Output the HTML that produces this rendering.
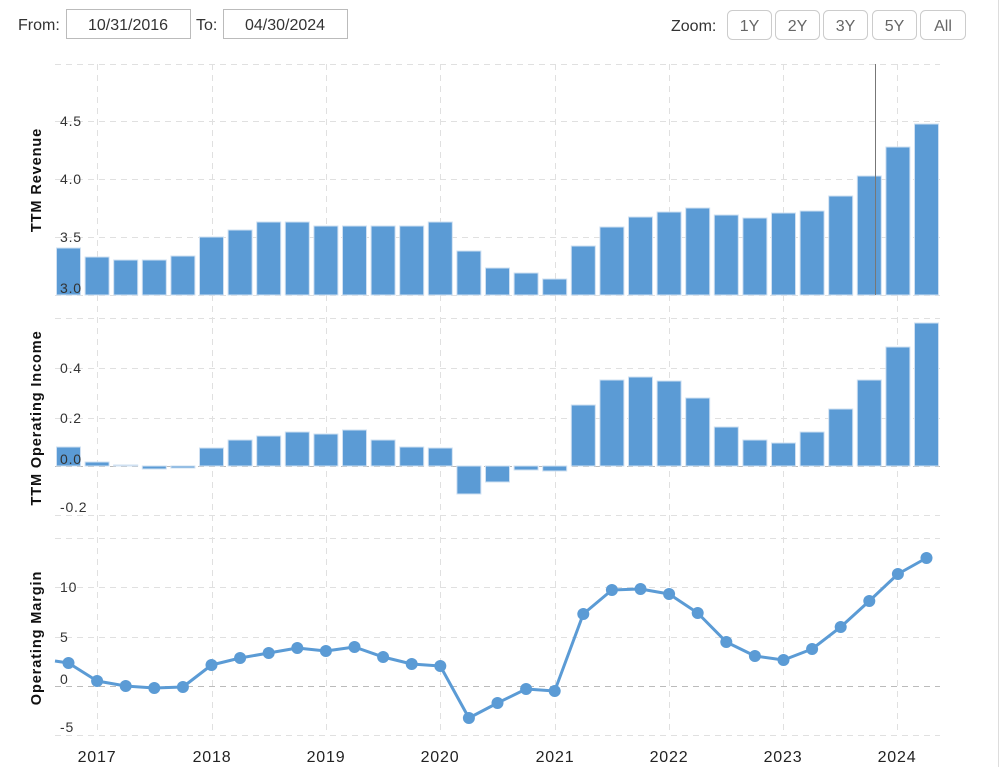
<!DOCTYPE html>
<html><head><meta charset="utf-8"><style>
body{margin:0;background:#fff;width:1004px;height:767px;overflow:hidden;font-family:"Liberation Sans",sans-serif}
</style></head><body>
<svg width="1004" height="767" xmlns="http://www.w3.org/2000/svg" font-family="Liberation Sans, sans-serif">
<text x="18" y="30" font-size="16" fill="#333">From:</text>
<rect x="66.5" y="9.5" width="124" height="29" fill="#fff" stroke="#bbb"/>
<text x="128" y="30" font-size="16" fill="#333" text-anchor="middle">10/31/2016</text>
<text x="196" y="30" font-size="16" fill="#333">To:</text>
<rect x="223.5" y="9.5" width="124" height="29" fill="#fff" stroke="#bbb"/>
<text x="285" y="30" font-size="16" fill="#333" text-anchor="middle">04/30/2024</text>
<text x="671" y="31" font-size="16" fill="#333">Zoom:</text>
<g font-size="16" fill="#666" text-anchor="middle">
<rect x="727.5" y="10.5" width="44" height="29" rx="5" fill="#fff" stroke="#ccc"/><text x="749.5" y="31">1Y</text>
<rect x="775.5" y="10.5" width="44" height="29" rx="5" fill="#fff" stroke="#ccc"/><text x="797.5" y="31">2Y</text>
<rect x="823.5" y="10.5" width="44" height="29" rx="5" fill="#fff" stroke="#ccc"/><text x="845.5" y="31">3Y</text>
<rect x="872.5" y="10.5" width="44" height="29" rx="5" fill="#fff" stroke="#ccc"/><text x="894.5" y="31">5Y</text>
<rect x="920.5" y="10.5" width="45" height="29" rx="5" fill="#fff" stroke="#ccc"/><text x="943" y="31">All</text>
</g>
<line x1="998.5" y1="0" x2="998.5" y2="767" stroke="#ddd"/>
<g stroke="#e0e0e0" stroke-dasharray="6,5" stroke-width="1">
<line x1="55" y1="64.5" x2="940" y2="64.5"/><line x1="55" y1="121.5" x2="940" y2="121.5"/><line x1="55" y1="179.5" x2="940" y2="179.5"/><line x1="55" y1="237.5" x2="940" y2="237.5"/><line x1="55" y1="295.5" x2="940" y2="295.5"/>
<line x1="55" y1="318.5" x2="940" y2="318.5"/><line x1="55" y1="368.5" x2="940" y2="368.5"/><line x1="55" y1="418.5" x2="940" y2="418.5"/><line x1="55" y1="515.5" x2="940" y2="515.5"/>
<line x1="55" y1="538.5" x2="940" y2="538.5"/><line x1="55" y1="587.5" x2="940" y2="587.5"/><line x1="55" y1="637.5" x2="940" y2="637.5"/><line x1="55" y1="735.5" x2="940" y2="735.5"/>
<line x1="97.5" y1="64" x2="97.5" y2="735"/><line x1="212.5" y1="64" x2="212.5" y2="735"/><line x1="326.5" y1="64" x2="326.5" y2="735"/><line x1="440.5" y1="64" x2="440.5" y2="735"/><line x1="555.5" y1="64" x2="555.5" y2="735"/><line x1="669.5" y1="64" x2="669.5" y2="735"/><line x1="783.5" y1="64" x2="783.5" y2="735"/><line x1="897.5" y1="64" x2="897.5" y2="735"/>
</g>
<g stroke="#bbb" stroke-dasharray="6,5"><line x1="55" y1="466.5" x2="940" y2="466.5"/><line x1="55" y1="686.5" x2="940" y2="686.5"/></g>
<g id="rev" fill="#5b9bd5" stroke="#cfe0f2" stroke-width="1"></g>
<g id="oi" fill="#5b9bd5" stroke="#cfe0f2" stroke-width="1"></g>
<line x1="875.5" y1="64" x2="875.5" y2="295" stroke="#777"/>
<g id="om"></g>
<g font-size="14" fill="#333" letter-spacing="0.8">
<text x="60" y="126">4.5</text><text x="60" y="184">4.0</text><text x="60" y="242">3.5</text><text x="60" y="293">3.0</text>
<text x="60" y="373">0.4</text><text x="60" y="423">0.2</text><text x="60" y="464">0.0</text><text x="60" y="512">-0.2</text>
<text x="60" y="592">10</text><text x="60" y="642">5</text><text x="60" y="684">0</text><text x="60" y="732">-5</text>
</g>
<g font-size="16" fill="#222" text-anchor="middle" letter-spacing="0.8">
<text x="97" y="762">2017</text><text x="212" y="762">2018</text><text x="326" y="762">2019</text><text x="440" y="762">2020</text><text x="555" y="762">2021</text><text x="669" y="762">2022</text><text x="783" y="762">2023</text><text x="897" y="762">2024</text>
</g>
<g font-size="14.5" font-weight="bold" fill="#111" text-anchor="middle" letter-spacing="0.9">
<text transform="translate(41,180) rotate(-90)">TTM Revenue</text>
<text transform="translate(41,418) rotate(-90)">TTM Operating Income</text>
<text transform="translate(41,638) rotate(-90)">Operating Margin</text>
</g>
</svg>
<script>
var ns="http://www.w3.org/2000/svg";
function el(p,t,a){var e=document.createElementNS(ns,t);for(var k in a)e.setAttribute(k,a[k]);document.getElementById(p).appendChild(e);}
var rev=[248,257,260,260,256,237,230,222,222,226,226,226,226,222,251,268,273,279,246,227,217,212,208,215,218,213,211,196,176,147,124];
var oi=[447,462,465,469,468,448,440,436,432,434,430,440,447,448,494,482,470,471,405,380,377,381,398,427,440,443,432,409,380,347,323];
var om=[663,681,686,688,687,665,658,653,648,651,647,657,664,666,718,703,689,691,614,590,589,594,613,642,656,660,649,627,601,574,558];
for(var i=0;i<31;i++){var cx=68.5+28.6*i,x=cx-12;
el("rev","rect",{x:x,y:rev[i],width:24,height:295-rev[i]});
var t=oi[i];if(t<=466)el("oi","rect",{x:x,y:t,width:24,height:466-t});else el("oi","rect",{x:x,y:466,width:24,height:t-466});}
var d="M55 661";for(i=0;i<31;i++)d+=" L"+(68.5+28.6*i)+" "+om[i];
el("om","path",{d:d,fill:"none",stroke:"#5b9bd5","stroke-width":3,"stroke-linejoin":"round"});
for(i=0;i<31;i++)el("om","circle",{cx:68.5+28.6*i,cy:om[i],r:6,fill:"#5b9bd5"});
</script>
</body></html>
